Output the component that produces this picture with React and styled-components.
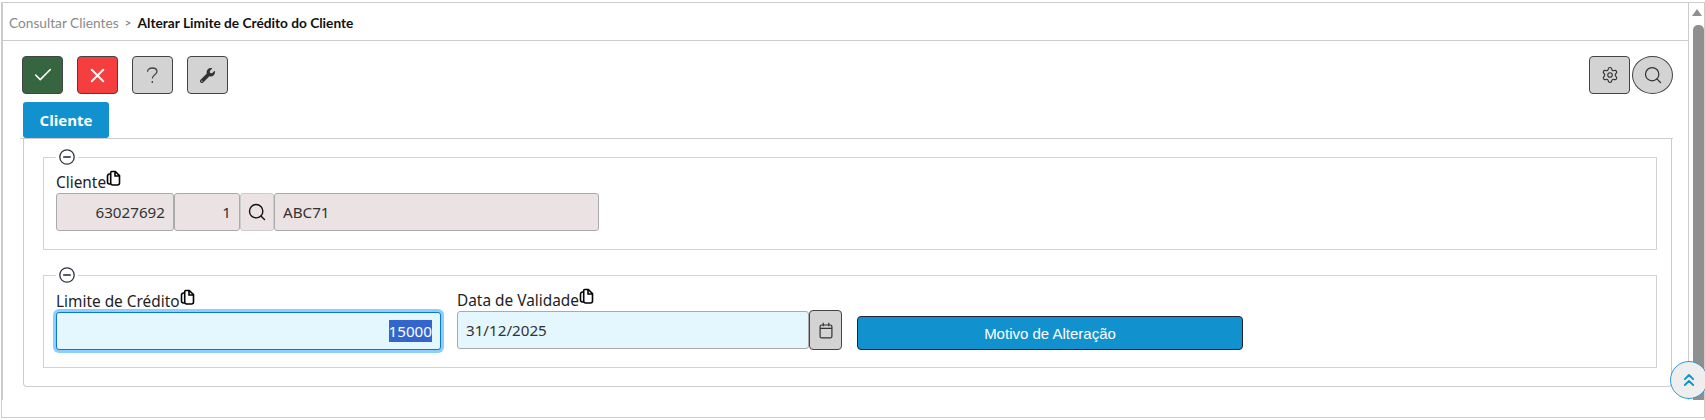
import React from "react";
import styled, { createGlobalStyle } from "styled-components";
import { Check, X, Search, Settings, ChevronsUp } from "lucide-react";
import { FaWrench } from "react-icons/fa";

const Global = createGlobalStyle`
  html, body { margin: 0; padding: 0; background: #fff; overflow: hidden; }
  * { box-sizing: border-box; }
`;

const Frame = styled.div`
  position: relative;
  width: 1704px;
  height: 416px;
  margin: 2px 0 0 1px;
  border: 1px solid #ccc;
  font-family: "Noto Sans", sans-serif;
  color: #222;
`;
const Scroller = styled.div`
  display: flex;
  height: 397px;
  border-left: 1px solid #ccc;
`;
const Main = styled.div`
  width: 1686px;
  border-right: 1px solid #ccc;
`;
const Breadcrumb = styled.div`
  display: flex;
  align-items: center;
  height: 38px;
  padding: 1px 0 0 6px;
  border-bottom: 1px solid #ccc;
  font-family: Lato, sans-serif;
  font-size: 13.7px;
`;
const Crumb = styled.span`
  color: #8a8a8a;
`;
const Sep = styled.span`
  color: #777;
  margin: 0 6px;
  font-size: 12px;
`;
const Current = styled.span`
  font-weight: 700;
  color: #111;
`;
const Toolbar = styled.div`
  display: flex;
  justify-content: space-between;
  padding: 15px 15px 0 19px;
`;
const Group = styled.div`
  display: flex;
  gap: ${(p) => p.$gap}px;
`;
const IconButton = styled.button`
  display: flex;
  align-items: center;
  justify-content: center;
  width: 41px;
  height: 38px;
  padding: 0;
  border: 1px solid #444;
  border-radius: ${(p) => (p.$round ? "50%" : "4px")};
  background: ${(p) => p.$bg || "#d3d3d3"};
  color: ${(p) => p.$fg || "#333"};
`;
const TabStrip = styled.div`
  display: flex;
  margin: 8px 15px 0 17px;
  padding-left: 3px;
  border-bottom: 1px solid #ccc;
`;
const Tab = styled.div`
  display: flex;
  align-items: center;
  justify-content: center;
  width: 86px;
  height: 36px;
  border-radius: 3px;
  background: #1192ce;
  color: #fff;
  font-family: "Open Sans", sans-serif;
  font-size: 15px;
  font-weight: 700;
`;
const Panel = styled.div`
  display: flex;
  flex-direction: column;
  gap: 17px;
  width: 1649px;
  height: 248px;
  margin-left: 20px;
  padding: 10px 14px 0 19px;
  border: 1px solid #ccc;
  border-top: 0;
  border-radius: 0 0 4px 4px;
`;
const Fieldset = styled.fieldset`
  display: block;
  height: 101px;
  min-width: 0;
  margin: 0;
  padding: 0 12px;
  border: 1px solid #d2d2d2;
`;
const Legend = styled.legend`
  display: flex;
  height: 16px;
  padding: 0 3px;
  color: #333;
`;
const Fields = styled.div`
  display: flex;
  align-items: flex-end;
  margin-top: 8px;
`;
const Field = styled.div`
  width: ${(p) => p.$w}px;
  margin-right: ${(p) => p.$mr || 0}px;
`;
const Label = styled.label`
  display: flex;
  align-items: flex-start;
  height: 20px;
  font-size: 15.4px;
  line-height: 20px;
  color: #222;
`;
const CopyMark = styled.svg`
  width: 15px;
  height: 17px;
  margin-top: -3px;
`;
const Row = styled.div`
  display: flex;
`;
const Input = styled.div`
  display: flex;
  align-items: center;
  justify-content: ${(p) => (p.$right ? "flex-end" : "flex-start")};
  width: ${(p) => p.$w}px;
  height: 38px;
  padding: 0 8px;
  border: 1px solid #aaa;
  border-radius: 3px;
  background: ${(p) => p.$bg || "#ebe3e3"};
  font-size: 15.2px;
  color: #333;
`;
const Focused = styled(Input)`
  border-color: #0a78d0;
  box-shadow: 0 0 0 3px #8ccfff;
  background: #e4f6fe;
`;
const Selected = styled.span`
  background: #3366cc;
  color: #fff;
  line-height: 22px;
`;
const LookupButton = styled.div`
  display: flex;
  align-items: center;
  justify-content: center;
  width: 34px;
  height: 38px;
  border: 1px solid #ccc;
  border-radius: 3px;
  background: #ebe3e3;
  color: #111;
`;
const CalendarButton = styled.div`
  display: flex;
  align-items: center;
  justify-content: center;
  width: 33px;
  height: 40px;
  margin-top: -1px;
  border: 1px solid #444;
  border-radius: 4px;
  background: #d3d3d3;
  color: #333;
`;
const Action = styled.button`
  width: 386px;
  height: 34px;
  border: 1px solid #223;
  border-radius: 4px;
  background: #1192ce;
  color: #fff;
  font-family: "Liberation Sans", sans-serif;
  font-size: 15px;
`;
const Track = styled.div`
  display: flex;
  flex-direction: column;
  align-items: flex-end;
  width: 15px;
`;
const Arrow = styled.div`
  align-self: center;
  width: 0;
  height: 0;
  margin-top: 6px;
  border-left: 5.5px solid transparent;
  border-right: 5.5px solid transparent;
  border-bottom: 7px solid #909090;
`;
const Thumb = styled.div`
  flex: 1;
  width: 11px;
  margin-top: 9px;
  border-radius: 5px 5px 0 0;
  background: #8f8f8f;
`;
const ToTop = styled.div`
  position: absolute;
  left: 1668px;
  top: 358px;
  display: flex;
  align-items: center;
  justify-content: center;
  width: 38px;
  height: 38px;
  border: 1px solid #2c9ad6;
  border-radius: 50%;
  background: #eee;
  color: #1192ce;
  clip-path: inset(-1px 3px -1px -1px);
`;

const Copy = () => (
  <CopyMark viewBox="0 0 15 17" fill="none" stroke="#000" strokeWidth="1.6">
    <path d="M4.5 14H3.5a2 2 0 0 1-2-2V6a2 2 0 0 1 2-2h1" />
    <path d="M4.7 2.5a1 1 0 0 1 1-1h3.6l4.2 4.2V13a2 2 0 0 1-2 2H6.7a2 2 0 0 1-2-2z" />
    <path d="M9 1.5v4.5h4.5" />
  </CopyMark>
);
const Collapse = () => (
  <svg width="16" height="16" viewBox="0 0 16 16" fill="none" stroke="#2c3440" strokeWidth="1.3">
    <circle cx="8" cy="8" r="7.2" />
    <path d="M4.2 8h7.6" strokeWidth="1.6" />
  </svg>
);
const Question = () => (
  <svg width="13" height="17" viewBox="0 0 13 17" fill="none" stroke="#444" strokeWidth="1.3">
    <path d="M1.5 4.8C1.5 2.4 3.5 1 6.3 1s4.7 1.5 4.7 3.6c0 3.2-4.7 3.2-4.7 6.9" />
    <path d="M6.3 14v2" />
  </svg>
);
const CalendarGlyph = () => (
  <svg width="14" height="17" viewBox="0 0 14 17" fill="none" stroke="#333" strokeWidth="1.2">
    <rect x="1.1" y="3" width="11.8" height="12.9" rx="1.5" />
    <path d="M1.1 6.3h11.8M4.2 0.8v3.4M9.8 0.8v3.4" />
  </svg>
);

export default function App() {
  return (
    <>
      <Global />
      <Frame>
        <Scroller>
          <Main>
            <Breadcrumb>
              <Crumb>Consultar Clientes</Crumb>
              <Sep>&gt;</Sep>
              <Current>Alterar Limite de Crédito do Cliente</Current>
            </Breadcrumb>
            <Toolbar>
              <Group $gap={14}>
                <IconButton $bg="#35663f" $fg="#fff"><Check size={22} strokeWidth={1.7} /></IconButton>
                <IconButton $bg="#f53f3f" $fg="#fff"><X size={23} strokeWidth={2.1} /></IconButton>
                <IconButton><Question /></IconButton>
                <IconButton><FaWrench size={15} color="#333" /></IconButton>
              </Group>
              <Group $gap={2}>
                <IconButton><Settings size={18} strokeWidth={1.5} /></IconButton>
                <IconButton $round><Search size={20} strokeWidth={1.5} /></IconButton>
              </Group>
            </Toolbar>
            <TabStrip><Tab>Cliente</Tab></TabStrip>
            <Panel>
              <Fieldset>
                <Legend><Collapse /></Legend>
                <Fields>
                  <Field>
                    <Label>Cliente<Copy /></Label>
                    <Row>
                      <Input $w={118} $right>63027692</Input>
                      <Input $w={66} $right>1</Input>
                      <LookupButton><Search size={20} strokeWidth={1.7} /></LookupButton>
                      <Input $w={325}>ABC71</Input>
                    </Row>
                  </Field>
                </Fields>
              </Fieldset>
              <Fieldset>
                <Legend><Collapse /></Legend>
                <Fields>
                  <Field $w={385} $mr={16}>
                    <Label>Limite de Crédito<Copy /></Label>
                    <Focused $w={385} $right><Selected>15000</Selected></Focused>
                  </Field>
                  <Field $w={385} $mr={15}>
                    <Label>Data de Validade<Copy /></Label>
                    <Row>
                      <Input $w={352} $bg="#e4f6fe">31/12/2025</Input>
                      <CalendarButton><CalendarGlyph /></CalendarButton>
                    </Row>
                  </Field>
                  <Action>Motivo de Alteração</Action>
                </Fields>
              </Fieldset>
            </Panel>
          </Main>
          <Track>
            <Arrow />
            <Thumb />
          </Track>
        </Scroller>
        <ToTop><ChevronsUp size={20} strokeWidth={2.2} /></ToTop>
      </Frame>
    </>
  );
}
